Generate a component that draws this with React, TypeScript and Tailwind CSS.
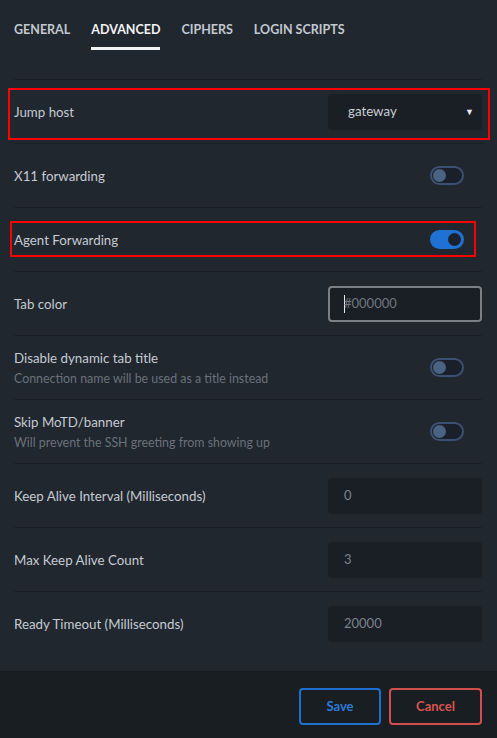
import React from 'react';

const Toggle = ({ on }: { on?: boolean }) => (
    <div
        className={
            on
                ? "w-[34px] h-[19px] rounded-full bg-[#1f72d3] border-2 border-[#1f72d3] flex items-center justify-end pr-[1px]"
                : "w-[34px] h-[19px] rounded-full bg-[#1a2029] border-2 border-[#3a5270] flex items-center pl-[1px]"
        }
    >
        <div className={on ? "w-[13px] h-[13px] rounded-full bg-[#1a2230]" : "w-[13px] h-[13px] rounded-full bg-[#4a6383]"} />
    </div>
);

const Field = ({ value }: { value: string }) => (
    <div className="w-[154px] h-[36px] rounded-[4px] bg-[#1a1e25] flex items-center pl-[16px] text-[13px] text-[#7c838c]">
        {value}
    </div>
);

const Row = ({ children, last }: { children: React.ReactNode; last?: boolean }) => (
    <div className={last ? "h-[64px] flex items-center justify-between" : "h-[64px] flex items-center justify-between border-b border-[#1a1f26]"}>
        {children}
    </div>
);

const Label = ({ text, desc }: { text: string; desc?: string }) => (
    <div className="flex flex-col">
        <span className="text-[13.3px] text-[#c6cbd2] leading-[18px]">{text}</span>
        {desc && <span className="text-[12.4px] text-[#6a717a] leading-[16px] mt-[4px]">{desc}</span>}
    </div>
);

export default function App() {
    const tabs = ["GENERAL", "ADVANCED", "CIPHERS", "LOGIN SCRIPTS"];

    return (
        <div className="relative h-[738px] w-[497px] flex flex-col bg-[#20272f]" style={{ fontFamily: '"Lato", "Liberation Sans", sans-serif' }}>
            {/* Tabs */}
            <div className="flex gap-[21px] pl-[14px] pt-[22px]">
                {tabs.map((t) => (
                    <div
                        key={t}
                        className={
                            t === "ADVANCED"
                                ? "pb-[9px] border-b-[3px] border-[#f2f3f5] text-[12.5px] font-bold text-[#f2f3f5] leading-[16px]"
                                : "pb-[9px] border-b-[3px] border-transparent text-[12.5px] font-bold text-[#c3c8cf] leading-[16px]"
                        }
                    >
                        {t}
                    </div>
                ))}
            </div>

            {/* Settings list */}
            <div className="flex-1 mt-[29px] ml-[14px] mr-[15px] border-t border-[#1a1f26]">
                <Row>
                    <Label text="Jump host" />
                    <div className="w-[154px] h-[36px] rounded-[4px] bg-[#1a1e25] flex items-center justify-between pl-[20px] pr-[8px] text-[13.3px] text-[#c9ced5]">
                        <span>gateway</span>
                        <span className="text-[9px] text-[#e8eaed]">▼</span>
                    </div>
                </Row>
                <Row>
                    <Label text="X11 forwarding" />
                    <div className="mr-[18px]"><Toggle /></div>
                </Row>
                <Row>
                    <Label text="Agent Forwarding" />
                    <div className="mr-[18px]"><Toggle on /></div>
                </Row>
                <Row>
                    <Label text="Tab color" />
                    <div className="w-[154px] h-[36px] rounded-[4px] bg-[#1a1e25] border-2 border-[#7b8086] flex items-center pl-[14px] text-[13px] text-[#6f767f]">
                        <span className="w-[1px] h-[18px] bg-[#e8eaed] mr-[-1px]" />
                        <span>#000000</span>
                    </div>
                </Row>
                <Row>
                    <Label text="Disable dynamic tab title" desc="Connection name will be used as a title instead" />
                    <div className="mr-[18px]"><Toggle /></div>
                </Row>
                <Row>
                    <Label text="Skip MoTD/banner" desc="Will prevent the SSH greeting from showing up" />
                    <div className="mr-[18px]"><Toggle /></div>
                </Row>
                <Row>
                    <Label text="Keep Alive Interval (Milliseconds)" />
                    <Field value="0" />
                </Row>
                <Row>
                    <Label text="Max Keep Alive Count" />
                    <Field value="3" />
                </Row>
                <Row last>
                    <Label text="Ready Timeout (Milliseconds)" />
                    <Field value="20000" />
                </Row>
            </div>

            {/* Footer */}
            <div className="h-[67px] bg-[#191e22] flex justify-end items-start gap-[8px] pt-[17px] pr-[15px]">
                <button className="w-[82px] h-[37px] rounded-[4px] border-2 border-[#1f6fd0] text-[13px] font-bold text-[#2b7ad8]">
                    Save
                </button>
                <button className="w-[93px] h-[37px] rounded-[4px] border-2 border-[#d2504b] text-[13px] font-bold text-[#d9544f]">
                    Cancel
                </button>
            </div>

            {/* Annotation boxes */}
            <div className="absolute left-[8px] top-[88px] w-[482px] h-[52px] border-2 border-[#ff0000]" />
            <div className="absolute left-[10px] top-[221px] w-[466px] h-[36px] border-2 border-[#ff0000]" />
        </div>
    );
}
